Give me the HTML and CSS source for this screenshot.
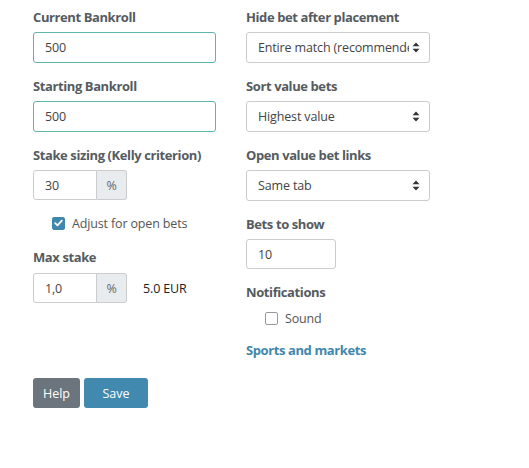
FILE: index.html
```html
<!DOCTYPE html>
<html>
<head>
<meta charset="utf-8">
<link rel="stylesheet" href="styles.css">
</head>
<body>
<div class="page">
  <div class="cols">
    <div class="col left">
      <div class="group">
        <label class="lbl">Current Bankroll</label>
        <div class="input valid">500</div>
      </div>
      <div class="group">
        <label class="lbl">Starting Bankroll</label>
        <div class="input valid">500</div>
      </div>
      <div class="group">
        <label class="lbl">Stake sizing (Kelly criterion)</label>
        <div class="igroup">
          <div class="input small">30</div>
          <div class="addon">%</div>
        </div>
      </div>
      <div class="check-row">
        <span class="cb checked"><svg width="9" height="8" viewBox="0 0 9 8"><path d="M1.2 4.2 L3.5 6.3 L7.8 1.6" fill="none" stroke="#fff" stroke-width="1.8" stroke-linecap="round" stroke-linejoin="round"/></svg></span>
        <span class="cb-text">Adjust for open bets</span>
      </div>
      <div class="group">
        <label class="lbl lbl-max">Max stake</label>
        <div class="stake-row">
          <div class="igroup">
            <div class="input small">1,0</div>
            <div class="addon">%</div>
          </div>
          <span class="eur">5.0 EUR</span>
        </div>
      </div>
    </div>
    <div class="col right">
      <div class="group">
        <label class="lbl">Hide bet after placement</label>
        <div class="select"><span class="sel-text">Entire match (recommended)</span><svg class="arr" width="8" height="11" viewBox="0 0 8 11"><path d="M4 0.5 L7.5 4.3 H0.5 Z M4 10.5 L7.5 6.7 H0.5 Z" fill="#333"/></svg></div>
      </div>
      <div class="group">
        <label class="lbl">Sort value bets</label>
        <div class="select"><span class="sel-text">Highest value</span><svg class="arr" width="8" height="11" viewBox="0 0 8 11"><path d="M4 0.5 L7.5 4.3 H0.5 Z M4 10.5 L7.5 6.7 H0.5 Z" fill="#333"/></svg></div>
      </div>
      <div class="group">
        <label class="lbl">Open value bet links</label>
        <div class="select"><span class="sel-text">Same tab</span><svg class="arr" width="8" height="11" viewBox="0 0 8 11"><path d="M4 0.5 L7.5 4.3 H0.5 Z M4 10.5 L7.5 6.7 H0.5 Z" fill="#333"/></svg></div>
      </div>
      <div class="group">
        <label class="lbl">Bets to show</label>
        <div class="input bets">10</div>
      </div>
      <div class="group notif">
        <label class="lbl">Notifications</label>
        <div class="check-row sound">
          <span class="cb"></span>
          <span class="cb-text">Sound</span>
        </div>
      </div>
      <a class="link">Sports and markets</a>
    </div>
  </div>
  <div class="buttons">
    <button class="btn help">Help</button>
    <button class="btn save">Save</button>
  </div>
</div>
</body>
</html>
```

FILE: styles.css
```css
html, body {
  margin: 0;
  padding: 0;
  background: #fff;
}
body {
  font-family: "Open Sans", "Noto Sans", sans-serif;
  font-size: 12.5px;
  letter-spacing: -0.15px;
  color: #333;
}
.page {
  padding: 7px 0 0 33px;
}
.cols {
  display: flex;
  gap: 30px;
}
.col.left { width: 183px; }
.col.right { width: 184px; }
.group {
  display: flex;
  flex-direction: column;
  margin-bottom: 13px;
}
.lbl {
  font-size: 13px;
  font-weight: 700;
  color: #555b60;
  line-height: 20px;
  margin-bottom: 5px;
  letter-spacing: -0.4px;
  white-space: nowrap;
}
.lbl-max { margin-bottom: 6px; }
.input {
  box-sizing: border-box;
  height: 31px;
  border: 1px solid #ccc;
  border-radius: 3px;
  padding: 0 11px;
  display: flex;
  align-items: center;
  color: #444;
}
.input.valid { border-color: #5fb5aa; }
.igroup {
  display: flex;
  width: 94px;
}
.input.small {
  width: 64px;
  border-radius: 3px 0 0 3px;
  height: 30px;
}
.addon {
  box-sizing: border-box;
  width: 30px;
  height: 30px;
  background: #e9ecef;
  border: 1px solid #ccc;
  border-left: 0;
  border-radius: 0 3px 3px 0;
  display: flex;
  align-items: center;
  justify-content: center;
  color: #666;
}
.check-row {
  display: flex;
  align-items: center;
  gap: 7px;
  height: 20px;
  margin: 12px 0 14px 19px;
}
.cb {
  box-sizing: border-box;
  width: 13px;
  height: 13px;
  border: 1px solid #999;
  border-radius: 2px;
  display: flex;
  align-items: center;
  justify-content: center;
}
.cb.checked {
  background: #3f87ad;
  border-color: #3f87ad;
}
.cb-text { color: #555; }
.stake-row {
  display: flex;
  align-items: center;
  gap: 16px;
}
.eur { color: #222; }
.select {
  box-sizing: border-box;
  height: 31px;
  border: 1px solid #ccc;
  border-radius: 3px;
  padding: 0 9px 0 11px;
  display: flex;
  align-items: center;
  color: #444;
}
.sel-text {
  flex: 1;
  overflow: hidden;
  white-space: nowrap;
  margin-right: 3px;
}
.arr { flex: none; }
.input.bets {
  width: 90px;
  height: 30px;
}
.notif { margin-bottom: 12px; }
.check-row.sound {
  margin: 1px 0 0 19px;
}
.link {
  display: block;
  font-size: 13px;
  font-weight: 700;
  color: #3f87ad;
  line-height: 20px;
  letter-spacing: -0.4px;
}
.buttons {
  display: flex;
  gap: 4px;
  margin-top: 18px;
}
.btn {
  font-family: inherit;
  font-size: 12.5px;
  border: 0;
  border-radius: 3px;
  height: 30px;
  color: #fff;
  padding: 0;
}
.btn.help { background: #6c757d; width: 47px; }
.btn.save { background: #4289b0; width: 64px; }
```
